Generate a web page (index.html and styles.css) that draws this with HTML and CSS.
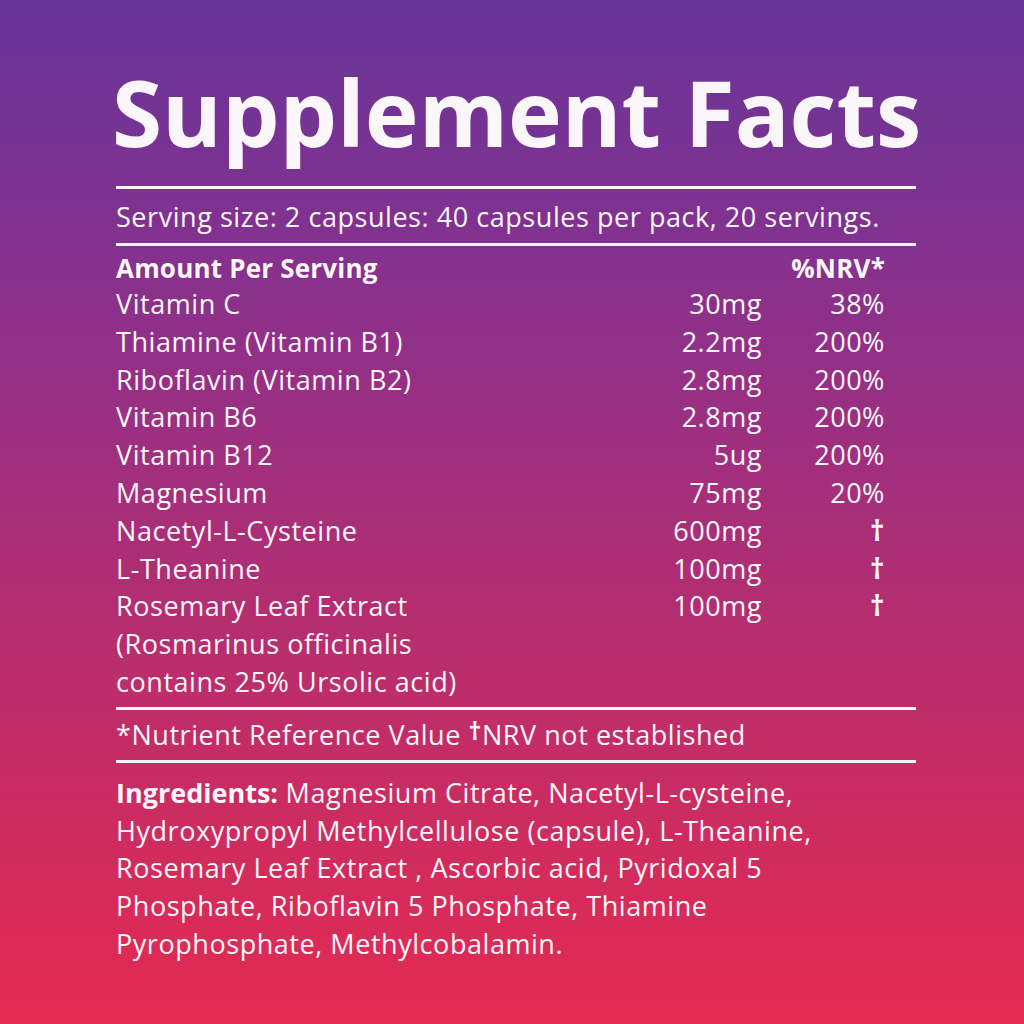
FILE: index.html
```html
<!DOCTYPE html>
<html>
<head>
<meta charset="utf-8">
<link rel="stylesheet" href="styles.css">
</head>
<body>
<main class="panel">
  <h1 class="title">Supplement Facts</h1>
  <hr class="rule">
  <p class="serving">Serving size: 2 capsules: 40 capsules per pack, 20 servings.</p>
  <hr class="rule">
  <div class="facts">
    <div class="row head"><span class="name">Amount Per Serving</span><span class="amt"></span><span class="nrv">%NRV*</span></div>
    <div class="row"><span class="name">Vitamin C</span><span class="amt">30mg</span><span class="nrv">38%</span></div>
    <div class="row"><span class="name">Thiamine (Vitamin B1)</span><span class="amt">2.2mg</span><span class="nrv">200%</span></div>
    <div class="row"><span class="name">Riboflavin (Vitamin B2)</span><span class="amt">2.8mg</span><span class="nrv">200%</span></div>
    <div class="row"><span class="name">Vitamin B6</span><span class="amt">2.8mg</span><span class="nrv">200%</span></div>
    <div class="row"><span class="name">Vitamin B12</span><span class="amt">5ug</span><span class="nrv">200%</span></div>
    <div class="row"><span class="name">Magnesium</span><span class="amt">75mg</span><span class="nrv">20%</span></div>
    <div class="row"><span class="name">Nacetyl-L-Cysteine</span><span class="amt">600mg</span><span class="nrv dag">†</span></div>
    <div class="row"><span class="name">L-Theanine</span><span class="amt">100mg</span><span class="nrv dag">†</span></div>
    <div class="row"><span class="name">Rosemary Leaf Extract<br>(Rosmarinus officinalis<br>contains 25% Ursolic acid)</span><span class="amt">100mg</span><span class="nrv dag">†</span></div>
  </div>
  <hr class="rule">
  <p class="note">*Nutrient Reference Value <span class="sup">†</span>NRV not established</p>
  <hr class="rule">
  <p class="ingredients"><strong>Ingredients:</strong> Magnesium Citrate, Nacetyl-L-cysteine,<br>Hydroxypropyl Methylcellulose (capsule), L-Theanine,<br>Rosemary Leaf Extract , Ascorbic acid, Pyridoxal 5<br>Phosphate, Riboflavin 5 Phosphate, Thiamine<br>Pyrophosphate, Methylcobalamin.</p>
</main>
</body>
</html>
```

FILE: styles.css
```css
html, body {
  margin: 0;
  padding: 0;
}
body {
  width: 1024px;
  height: 1024px;
  overflow: hidden;
  background: linear-gradient(180deg, #673598 0%, #7e3291 20%, #9a2f83 40%, #b42e70 60%, #cc2c60 80%, #e52a51 100%);
  color: #fbf6fa;
  font-family: "Open Sans", "Noto Sans", sans-serif;
}
.panel {
  width: 800px;
  margin-left: 116px;
  padding-top: 57px;
}
.title {
  margin: 0 0 0 -4px;
  font-size: 91px;
  font-weight: 700;
  line-height: 110px;
  text-align: center;
  letter-spacing: 0;
  white-space: nowrap;
}
.rule {
  border: 0;
  height: 3px;
  background: #fbf6fa;
  margin: 0;
}
.title + .rule {
  margin-top: 19px;
}
.serving {
  margin: 0;
  font-size: 27px;
  letter-spacing: 0.55px;
  line-height: 53px;
  padding-top: 1px;
  white-space: nowrap;
}
.facts {
  width: 769px;
  padding-top: 5px;
  padding-bottom: 6px;
}
.row {
  display: grid;
  grid-template-columns: 1fr 120px 123px;
  font-size: 27px;
  letter-spacing: 0.55px;
  line-height: 37.8px;
  white-space: nowrap;
}
.row.head {
  font-weight: 700;
  font-size: 26px;
  letter-spacing: 0.2px;
  line-height: 34px;
}
.amt, .nrv {
  text-align: right;
}
.dag {
  font-weight: 700;
  font-size: 28px;
}
.note {
  margin: 0;
  font-size: 27px;
  letter-spacing: 0.55px;
  line-height: 49px;
  white-space: nowrap;
}
.sup {
  font-weight: 700;
  font-size: 25px;
  position: relative;
  top: -5px;
}
.ingredients {
  margin: 0;
  padding-top: 11px;
  font-size: 27px;
  letter-spacing: 0.55px;
  line-height: 37.8px;
  white-space: nowrap;
}
.ingredients strong {
  font-weight: 700;
  letter-spacing: 0;
}
```
